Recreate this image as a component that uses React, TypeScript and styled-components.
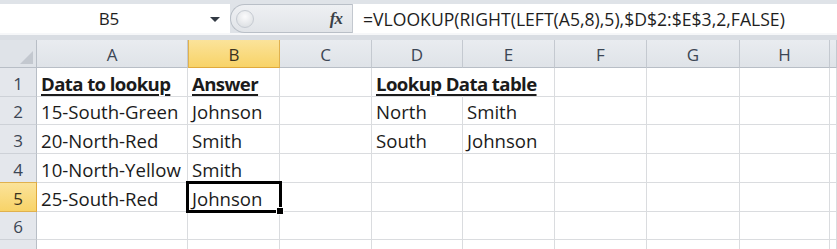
import React from "react";
import styled, { createGlobalStyle } from "styled-components";

const GlobalStyle = createGlobalStyle`
  html, body { margin: 0; padding: 0; background: #ffffff; }
  body {
    font-family: "Open Sans", "Liberation Sans", sans-serif;
    overflow: hidden;
    width: 837px;
    height: 249px;
  }
`;

// column widths in px, row header first
const COLS = [37, 151, 92, 92, 91, 92, 92, 93, 90, 7];
const LETTERS = ["A", "B", "C", "D", "E", "F", "G", "H", ""];
const ROW_H = [28, 29, 28, 29, 29, 29, 28, 29];

type CellData = { text?: string; bold?: boolean; spill?: boolean };

const DATA: CellData[][] = [
  [{ text: "Data to lookup", bold: true }, { text: "Answer", bold: true }, {}, { text: "Lookup Data table", bold: true, spill: true }],
  [{ text: "15-South-Green" }, { text: "Johnson" }, {}, { text: "North" }, { text: "Smith" }],
  [{ text: "20-North-Red" }, { text: "Smith" }, {}, { text: "South" }, { text: "Johnson" }],
  [{ text: "10-North-Yellow" }, { text: "Smith" }],
  [{ text: "25-South-Red" }, { text: "Johnson" }],
  [],
  [],
];

const SELECTED_COL = 1;
const SELECTED_ROW = 4;
// last row is only partly on screen, its number is cut away
const VISIBLE_NUMBERS = 6;

const Page = styled.div`
  width: 837px;
  height: 249px;
  overflow: hidden;
  background: #ffffff;
`;

const FormulaBar = styled.div`
  display: flex;
  height: 40px;
  box-sizing: border-box;
  padding: 4px 0 7px;
  background: linear-gradient(
    to bottom,
    #dfe3e8 0 33px,
    #f6f7f9 33px 35px,
    #d9dde3 35px
  );
`;

const NameBox = styled.div`
  width: 230px;
  display: flex;
  align-items: center;
  background: #ffffff;
  font-size: 17px;
  color: #1e1e1e;
`;

const NameText = styled.div`
  flex: 1;
  text-align: center;
  padding-left: 8px;
`;

const DropArrow = styled.div`
  width: 0;
  height: 0;
  border-left: 5px solid transparent;
  border-right: 5px solid transparent;
  border-top: 5px solid #333a44;
  margin: 2px 10px 0 0;
`;

const Middle = styled.div`
  width: 122px;
  display: flex;
  align-items: stretch;
`;

const Pill = styled.div`
  flex: 1;
  display: flex;
  align-items: center;
  justify-content: space-between;
  box-sizing: border-box;
  border: 1px solid #b9bfc7;
  border-right: none;
  border-radius: 15px 0 0 15px;
  background: linear-gradient(to bottom, #eef0f3, #e1e4e8);
  padding: 0 10px 0 5px;
`;

const Knob = styled.div`
  width: 16px;
  height: 16px;
  border-radius: 50%;
  border: 1px solid #c6cbd2;
  background: radial-gradient(circle at 50% 35%, #fbfbfc, #d6dade);
`;

const Fx = styled.span`
  font-family: "Liberation Serif", "DejaVu Serif", serif;
  font-style: italic;
  font-weight: bold;
  font-size: 17px;
  color: #3a3f46;
  letter-spacing: -1px;
`;

const FormulaInput = styled.div`
  flex: 1;
  display: flex;
  align-items: center;
  background: #ffffff;
  border-left: 1px solid #c3c8cf;
  padding-left: 10px;
  font-size: 17.6px;
  color: #1e1e1e;
  white-space: nowrap;
  overflow: hidden;
`;

const Grid = styled.div`
  display: grid;
  grid-template-columns: ${COLS.map((c) => `${c}px`).join(" ")};
  grid-template-rows: ${ROW_H.map((r) => `${r}px`).join(" ")};
`;

const Corner = styled.div`
  position: relative;
  box-sizing: border-box;
  background: #dfe3e8;
  border-right: 1px solid #b8bec6;
  border-bottom: 1px solid #b8bec6;
  &::after {
    content: "";
    position: absolute;
    right: 3px;
    bottom: 3px;
    width: 0;
    height: 0;
    border-left: 13px solid transparent;
    border-bottom: 13px solid #c3c8cf;
  }
`;

const ColHeader = styled.div<{ $active?: boolean }>`
  display: flex;
  align-items: center;
  justify-content: center;
  padding-top: 2px;
  box-sizing: border-box;
  font-size: 17px;
  color: ${(p) => (p.$active ? "#3b3320" : "#3c4654")};
  background: ${(p) =>
    p.$active
      ? "linear-gradient(to bottom, #fbe39a, #f8d368)"
      : "linear-gradient(to bottom, #e9ecf0, #dfe3e8)"};
  border-right: 1px solid ${(p) => (p.$active ? "#e0b14e" : "#c4c9d0")};
  border-left: ${(p) => (p.$active ? "1px solid #e0b14e" : "none")};
  border-bottom: 1px solid ${(p) => (p.$active ? "#e0a93c" : "#b8bec6")};
`;

const RowHeader = styled.div<{ $active?: boolean }>`
  display: flex;
  align-items: center;
  justify-content: center;
  padding-top: 2px;
  box-sizing: border-box;
  font-size: 17px;
  color: ${(p) => (p.$active ? "#3b3320" : "#3c4654")};
  background: ${(p) =>
    p.$active
      ? "linear-gradient(to bottom, #fbe39a, #f8d368)"
      : "#e4e7ec"};
  border-right: 1px solid ${(p) => (p.$active ? "#e0a93c" : "#b8bec6")};
  border-bottom: 1px solid ${(p) => (p.$active ? "#e0b14e" : "#cdd1d7")};
  border-top: ${(p) => (p.$active ? "1px solid #e0b14e" : "none")};
  margin-top: ${(p) => (p.$active ? "-1px" : "0")};
`;

const Cell = styled.div<{ $bold?: boolean; $spill?: boolean }>`
  position: relative;
  display: flex;
  align-items: flex-end;
  box-sizing: border-box;
  padding: 0 0 0 4px;
  border-right: 1px solid ${(p) => (p.$spill ? "transparent" : "#dadcdf")};
  border-bottom: 1px solid #dadcdf;
  font-size: 18.6px;
  line-height: 24px;
  color: #1b1b1b;
  white-space: nowrap;
  overflow: ${(p) => (p.$spill ? "visible" : "hidden")};
  font-weight: ${(p) => (p.$bold ? 700 : 400)};
  text-decoration: ${(p) => (p.$bold ? "underline" : "none")};
  text-decoration-thickness: 2px;
  text-underline-offset: 3px;
  letter-spacing: ${(p) => (p.$bold ? "-0.6px" : "0")};
  z-index: ${(p) => (p.$spill ? 1 : 0)};
`;

const Selection = styled.div`
  position: absolute;
  left: -2px;
  top: -2px;
  right: -3px;
  bottom: -2px;
  border: 3px solid #000000;
  pointer-events: none;
  &::after {
    content: "";
    position: absolute;
    right: -5px;
    bottom: -5px;
    width: 6px;
    height: 6px;
    background: #000000;
    border: 1px solid #ffffff;
  }
`;

const SelectedCell = styled(Cell)`
  overflow: visible;
  z-index: 2;
`;

export default function App() {
  return (
    <Page>
      <GlobalStyle />
      <FormulaBar>
        <NameBox>
          <NameText>B5</NameText>
          <DropArrow />
        </NameBox>
        <Middle>
          <Pill>
            <Knob />
            <Fx>fx</Fx>
          </Pill>
        </Middle>
        <FormulaInput>=VLOOKUP(RIGHT(LEFT(A5,8),5),$D$2:$E$3,2,FALSE)</FormulaInput>
      </FormulaBar>
      <Grid>
        <Corner />
        {LETTERS.map((l, i) => (
          <ColHeader key={`h${i}`} $active={i === SELECTED_COL}>
            {l}
          </ColHeader>
        ))}
        {DATA.map((row, r) => (
          <React.Fragment key={`r${r}`}>
            <RowHeader $active={r === SELECTED_ROW}>
              {r < VISIBLE_NUMBERS ? r + 1 : ""}
            </RowHeader>
            {LETTERS.map((_, c) => {
              const d = row[c] || {};
              if (r === SELECTED_ROW && c === SELECTED_COL) {
                return (
                  <SelectedCell key={`c${r}-${c}`}>
                    {d.text}
                    <Selection />
                  </SelectedCell>
                );
              }
              return (
                <Cell key={`c${r}-${c}`} $bold={d.bold} $spill={d.spill}>
                  {d.text}
                </Cell>
              );
            })}
          </React.Fragment>
        ))}
      </Grid>
    </Page>
  );
}
